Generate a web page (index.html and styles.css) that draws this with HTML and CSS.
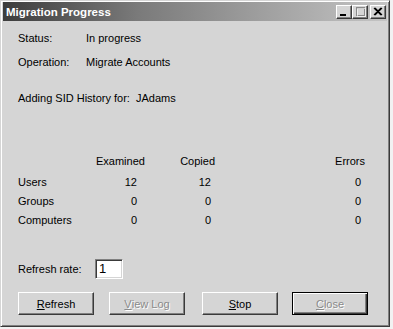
FILE: index.html
```html
<!DOCTYPE html>
<html>
<head>
<meta charset="utf-8">
<link rel="stylesheet" href="styles.css">
</head>
<body>
<div class="window">
  <div class="titlebar">
    <span class="title">Migration Progress</span>
    <div class="tbtns">
      <span class="tbtn"><svg width="14" height="12" viewBox="0 0 14 12"><rect x="3" y="8" width="6" height="2" fill="#000"/></svg></span>
      <span class="tbtn"><svg width="14" height="12" viewBox="0 0 14 12"><rect x="3.5" y="1.5" width="8" height="8" fill="none" stroke="#8a8a8a"/><rect x="3" y="1" width="9" height="2" fill="#8a8a8a"/><rect x="4.5" y="2.5" width="8" height="8" fill="none" stroke="#fff" opacity="0.6"/></svg></span>
      <span class="tbtn gap"><svg width="14" height="12" viewBox="0 0 14 12"><path d="M3 2 L10 9 M4 2 L11 9 M10 2 L3 9 M11 2 L4 9" stroke="#000" stroke-width="1.1"/></svg></span>
    </div>
  </div>
  <div class="content">
    <div class="info">
      <div class="row"><span class="lbl">Status:</span><span>In progress</span></div>
      <div class="row op"><span class="lbl">Operation:</span><span>Migrate Accounts</span></div>
      <div class="row sid">Adding SID History for:&nbsp; JAdams</div>
    </div>
    <div class="stats">
      <span></span><span class="h">Examined</span><span class="h">Copied</span><span class="h">Errors</span>
      <span class="name">Users</span><span class="n">12</span><span class="n">12</span><span class="n">0</span>
      <span class="name">Groups</span><span class="n">0</span><span class="n">0</span><span class="n">0</span>
      <span class="name">Computers</span><span class="n">0</span><span class="n">0</span><span class="n">0</span>
    </div>
    <div class="rate">
      <span class="rlbl">Refresh rate:</span>
      <span class="input">1</span>
    </div>
    <div class="buttons">
      <span class="btn b1"><u>R</u>efresh</span>
      <span class="btn dis b2"><u>V</u>iew Log</span>
      <span class="btn b3"><u>S</u>top</span>
      <span class="btn dis def b4"><u>C</u>lose</span>
    </div>
  </div>
</div>
</body>
</html>
```
FILE: styles.css
```css
html, body {
  margin: 0;
  padding: 0;
  background: #f2f2f2;
}
body {
  font-family: "Liberation Sans", Arial, sans-serif;
  font-size: 11px;
  color: #000;
}
.window {
  width: 390px;
  height: 327px;
  box-sizing: border-box;
  background: #d5d5d5;
  border-top: 1px solid #d5d5d5;
  border-left: 1px solid #d5d5d5;
  border-right: 1px solid #3a3a3a;
  border-bottom: 1px solid #3a3a3a;
  box-shadow: inset 1px 1px 0 #ffffff, inset -1px -1px 0 #808080;
  padding: 1px 2px 2px 2px;
  display: flex;
  flex-direction: column;
}
.titlebar {
  height: 19px;
  background: linear-gradient(to right, #3c3c3c 0%, #7a7a7a 35%, #c4c4c4 100%);
  display: flex;
  align-items: center;
  justify-content: space-between;
  padding: 0 1px 0 3px;
}
.title {
  color: #fff;
  font-weight: bold;
  font-size: 11.5px;
  font-family: "Liberation Sans", Arial, sans-serif;
}
.tbtns {
  display: flex;
  align-items: center;
}
.tbtn {
  width: 16px;
  height: 14px;
  box-sizing: border-box;
  background: #d5d5d5;
  border-top: 1px solid #fff;
  border-left: 1px solid #fff;
  border-right: 1px solid #3a3a3a;
  border-bottom: 1px solid #3a3a3a;
  box-shadow: inset -1px -1px 0 #808080;
  display: flex;
}
.tbtn svg { display: block; }
.tbtn.gap { margin-left: 2px; }
.content {
  flex: 1;
  padding: 10px 0 0 15px;
  display: flex;
  flex-direction: column;
}
.row {
  display: flex;
  line-height: 14px;
  height: 14px;
}
.lbl { width: 68px; }
.op { margin-top: 10px; }
.sid { margin-top: 22px; }
.stats {
  margin-top: 49px;
  display: grid;
  grid-template-columns: 78px 45px 74px 150px;
  grid-template-rows: 21px 19px 19px 14px;
  line-height: 14px;
}
.stats .h { text-align: right; }
.stats .n { text-align: right; padding-right: 4px; }
.rate {
  margin-top: 32px;
  display: flex;
  align-items: center;
  height: 20px;
}
.rlbl { width: 77px; }
.input {
  width: 28px;
  height: 20px;
  box-sizing: border-box;
  background: #fff;
  border-top: 1px solid #808080;
  border-left: 1px solid #808080;
  border-right: 1px solid #fff;
  border-bottom: 1px solid #fff;
  box-shadow: inset 1px 1px 0 #3a3a3a, inset -1px -1px 0 #d5d5d5;
  font-size: 13px;
  line-height: 17px;
  padding-left: 3px;
}
.buttons {
  margin-top: 13px;
  display: flex;
}
.btn {
  width: 76px;
  height: 23px;
  box-sizing: border-box;
  border-top: 1px solid #fff;
  border-left: 1px solid #fff;
  border-right: 1px solid #3a3a3a;
  border-bottom: 1px solid #3a3a3a;
  box-shadow: inset -1px -1px 0 #808080;
  display: flex;
  align-items: center;
  justify-content: center;
  font-size: 11px;
}
.b2 { margin-left: 15px; }
.b3 { margin-left: 17px; }
.b4 { margin-left: 14px; }
.btn.dis {
  color: #8a8a8a;
  text-shadow: 1px 1px 0 #fff;
}
.btn.def {
  border: 1px solid #000;
  box-shadow: inset 1px 1px 0 #fff, inset -1px -1px 0 #3a3a3a, inset -2px -2px 0 #808080;
}
```
